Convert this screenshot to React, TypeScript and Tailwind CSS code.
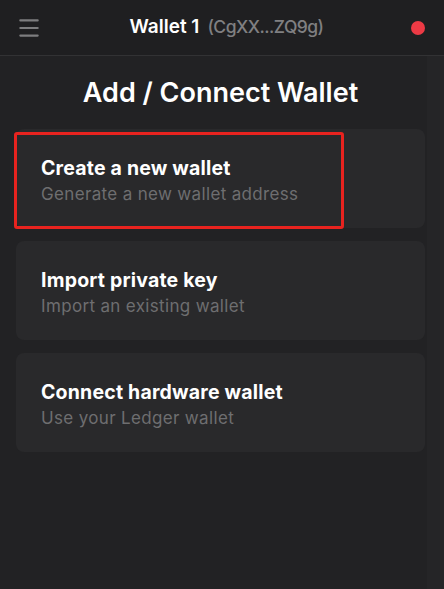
import { Menu } from "lucide-react";

interface Option {
    title: string;
    description: string;
    highlighted?: boolean;
}

const options: Option[] = [
    { title: "Create a new wallet", description: "Generate a new wallet address", highlighted: true },
    { title: "Import private key", description: "Import an existing wallet" },
    { title: "Connect hardware wallet", description: "Use your Ledger wallet" },
];

const OptionCard = ({ title, description, highlighted }: Option) => (
    <div className="relative h-[99px] rounded-lg bg-[#29292b] pl-[25px] pt-[26px]">
        {highlighted && (
            <div className="absolute left-[-2px] top-[3px] h-[97px] w-[330px] rounded-[3px] border-[3px] border-[#e8231f]" />
        )}
        <div className="text-[19.5px] font-bold leading-[26px] tracking-[0.01em] text-white">{title}</div>
        <div className="mt-[1px] text-[17px] leading-[24px] tracking-[0.02em] text-[#6e6e70]">{description}</div>
    </div>
);

export default function App() {
    return (
        <div className="flex h-[589px] w-[444px] flex-col bg-[#222224] font-['Inter',sans-serif]">
            <header className="flex h-[56px] items-center border-b border-[#323234] bg-[#1f1f21] px-[16px]">
                <Menu className="text-[#7d7d7f]" size={26} strokeWidth={2} />
                <div className="flex-1 text-center text-[19px] font-semibold text-white">
                    Wallet 1<span className="ml-[8px] text-[17.5px] font-medium tracking-[-0.03em] text-[#808082]">(CgXX...ZQ9g)</span>
                </div>
                <span className="mr-[3px] h-[14px] w-[14px] rounded-full bg-[#ec3a45]" />
            </header>
            <div className="flex flex-1">
                <main className="flex-1 pl-[16px] pr-[2px]">
                    <h1 className="mt-[17px] mb-[17px] text-center text-[27px] font-semibold leading-[39px] text-white">
                        Add / Connect Wallet
                    </h1>
                    <div className="flex flex-col gap-[13px]">
                        {options.map((option, index) => (
                            <OptionCard key={index} {...option} />
                        ))}
                    </div>
                </main>
                <div className="w-[17px] bg-[#252527]" />
            </div>
        </div>
    );
}
